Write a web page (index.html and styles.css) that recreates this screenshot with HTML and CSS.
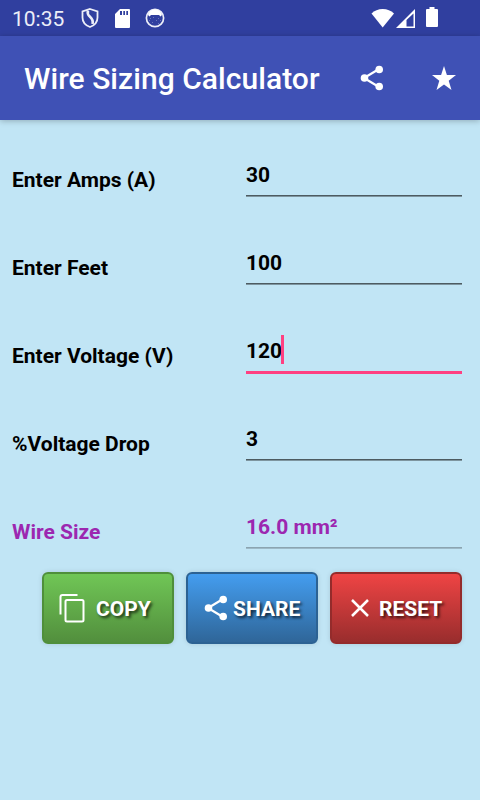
FILE: index.html
```html
<!DOCTYPE html>
<html lang="en">
<head>
    <meta charset="UTF-8">
    <meta name="viewport" content="width=device-width, initial-scale=1.0">
    <title>Wire Sizing Calculator</title>
    <link rel="stylesheet" href="styles.css">
</head>
<body>

    <!-- Status Bar -->
    <div class="status-bar">
        <span class="time">10:35</span>
        <svg class="shield" width="18" height="20" viewBox="0 0 18 20" fill="none" stroke="#eceef8" stroke-width="1.8">
            <path d="M9 1L16.5 3.5V9.5C16.5 14 13 17.5 9 19C5 17.5 1.5 14 1.500 9.5V3.5Z"/>
            <path d="M7 2.500C4.500 9.500 13.500 8 11.500 16" stroke-width="2.600"/>
        </svg>
        <svg class="sd-card" width="15" height="19" viewBox="0 0 15 19">
            <path fill="#fff" fill-rule="evenodd" d="M5 0H14Q15 0 15 1V18Q15 19 14 19H1Q0 19 0 18V5ZM5 2V6H7V2ZM8.300 2V6H10V2ZM11.300 2V6H13V2Z"/>
        </svg>
        <svg class="face" width="20" height="20" viewBox="0 0 20 20">
            <circle cx="10" cy="10" r="8.600" fill="none" stroke="#eceef8" stroke-width="1.700"/>
            <path fill="#fff" d="M3 7C4 3 7 1.500 10 1.500S16 3 17 7L15.500 8.500L14 7H6L4.500 8.500Z"/>
            <path fill="#6a75bb" d="M5 10h1v1H5zM8 9h1v1H8zM13 10h1v1h-1zM4 12h1v1H4zM11 12h1v1h-1zM15 12h1v1h-1zM7 14h1v1H7zM13 15h1v1h-1z"/>
        </svg>
        <div class="status-right">
            <svg width="24" height="20" viewBox="0 0 24 20">
                <path fill="#fff" d="M.5 5.500Q5 1 11.700 1T23 5.500L11.700 19.500Z"/>
            </svg>
            <svg width="20" height="20" viewBox="0 0 20 20">
                <path fill="#fff" fill-rule="evenodd" d="M1 20L20 1V20ZM11.500 12V18.500H18.500V5.500Z"/>
            </svg>
            <svg class="battery" width="12" height="20" viewBox="0 0 12 20">
                <path fill="#fff" d="M3.500 0H8.500V2H11Q12 2 12 3V19Q12 20 11 20H1Q0 20 0 19V3Q0 2 1 2H3.500Z"/>
            </svg>
        </div>
    </div>

    <!-- App Bar -->
    <div class="app-bar">
        <h1>Wire Sizing Calculator</h1>
        <svg class="share" width="36" height="36" viewBox="0 0 36 36">
            <path class="share-line" d="M25 9L10 18L25 27"/>
            <circle cx="25.200" cy="9.500" r="3.800"/><circle cx="10.500" cy="18" r="3.800"/><circle cx="25.200" cy="26.500" r="3.800"/>
        </svg>
        <svg class="star" width="24" height="24" viewBox="0 0 24 24">
            <path fill="#fff" d="M12 0L14.900 9H24L16.700 14.800L19.500 24L12 18.500L4.500 24L7.300 14.800L0 9H9.100Z"/>
        </svg>
    </div>

    <!-- Calculator Form -->
    <div class="form">
        <div class="row">
            <div class="label">Enter Amps (A)</div>
            <div class="field">30</div>
        </div>
        <div class="row">
            <div class="label">Enter Feet</div>
            <div class="field">100</div>
        </div>
        <div class="row">
            <div class="label">Enter Voltage (V)</div>
            <div class="field active">120<span class="cursor"></span></div>
        </div>
        <div class="row">
            <div class="label">%Voltage Drop</div>
            <div class="field">3</div>
        </div>
        <div class="row result">
            <div class="label">Wire Size</div>
            <div class="field">16.0 mm²</div>
        </div>
    </div>

    <!-- Buttons -->
    <div class="buttons">
        <button class="btn copy">
            <svg width="26" height="30" viewBox="0 0 26 30" fill="none" stroke="#fff" stroke-width="2">
                <path d="M1.500 21.500V4Q1.500 2 3.500 2H18.500"/>
                <rect x="6.500" y="7" width="18" height="21.500" rx="1.500"/>
            </svg>
            <span>COPY</span>
        </button>
        <button class="btn share-btn">
            <svg class="share" width="36" height="36" viewBox="0 0 36 36">
                <path class="share-line" d="M25 9L10 18L25 27"/>
                <circle cx="25.200" cy="9.500" r="3.800"/><circle cx="10.500" cy="18" r="3.800"/><circle cx="25.200" cy="26.500" r="3.800"/>
            </svg>
            <span>SHARE</span>
        </button>
        <button class="btn reset">
            <svg width="18" height="18" viewBox="0 0 18 18" fill="none" stroke="#fff" stroke-width="2.500">
                <path d="M1 1L17 17M17 1L1 17"/>
            </svg>
            <span>RESET</span>
        </button>
    </div>

</body>
</html>
```
FILE: styles.css
```css
* {
    box-sizing: border-box;
}
body {
    font-family: Roboto, sans-serif;
    margin: 0;
    height: 800px;
    background-color: #c1e5f5;
    overflow: hidden;
}
svg {
    display: block;
    flex: none;
}
.status-bar {
    display: flex;
    align-items: center;
    height: 36px;
    padding: 0 42px 0 12px;
    background: #303f9f;
    color: #eceef8;
}
.time {
    width: 69px;
    padding-top: 1px;
    font-size: 21px;
}
.shield {
    margin-top: -1px;
}
.sd-card {
    margin-left: 16px;
}
.face {
    margin-left: 15px;
}
.status-right {
    display: flex;
    margin: -2px 0 0 auto;
}
.status-right svg {
    margin-top: 1px;
}
.status-right .battery {
    margin: 0 0 0 11px;
}
.app-bar {
    display: flex;
    align-items: center;
    height: 84px;
    padding: 0 24px;
    background: #3f51b5;
    box-shadow: 0 1px 6px rgba(0, 0, 0, 0.25);
}
h1 {
    margin: 0;
    width: 330px;
    font-size: 30px;
    font-weight: 500;
    letter-spacing: 0.05px;
    color: #fff;
    white-space: nowrap;
}
.share {
    fill: #fff;
}
.share-line {
    fill: none;
    stroke: #fff;
    stroke-width: 2.2;
}
.star {
    margin-left: auto;
}
.form {
    padding: 12px 18px 0 12px;
}
.row {
    display: grid;
    grid-template-columns: 234px 216px;
    align-items: center;
    height: 88px;
    padding-top: 8px;
    font-size: 21px;
    font-weight: 700;
    color: #000;
}
.field {
    display: flex;
    align-items: center;
    align-self: start;
    height: 44px;
    margin-top: 13px;
    box-shadow: inset 0 -1px #7e959f, inset 0 -2px #4d5b61;
}
.active {
    height: 45px;
    padding-bottom: 2px;
    box-shadow: inset 0 -3px #ff4081;
}
.cursor {
    width: 3px;
    height: 29px;
    margin: -2px 0 0 -1px;
    background: #ff4081;
}
.result {
    color: #9c27b0;
}
.result .field {
    box-shadow: inset 0 -1px #9db9c7, inset 0 -2px #8ba4b0;
}
.buttons {
    display: flex;
    gap: 12px;
    padding-left: 42px;
}
.btn {
    display: flex;
    align-items: center;
    width: 132px;
    height: 72px;
    padding: 0;
    border: 2px solid;
    border-radius: 6px;
    font-family: Roboto, sans-serif;
    font-size: 21px;
    font-weight: 700;
    color: #fff;
    text-shadow: 2px 2px 3px rgba(0, 0, 0, 0.7);
    box-shadow: 0 0 5px rgba(0, 0, 0, 0.12);
}
.btn span {
    padding-top: 1px;
}
.copy {
    padding-left: 15px;
    border-color: #4f8f3b;
    background: linear-gradient(#70c656, #528f3d);
}
.copy span {
    margin-left: 11px;
}
.share-btn {
    padding-left: 10px;
    border-color: #2c6293;
    background: linear-gradient(#449def, #2f6699);
}
.share-btn span {
    margin-left: -1px;
}
.reset {
    padding-left: 19px;
    border-color: #942b2b;
    background: linear-gradient(#ef4444, #992d2d);
}
.reset span {
    margin-left: 10px;
}
```
